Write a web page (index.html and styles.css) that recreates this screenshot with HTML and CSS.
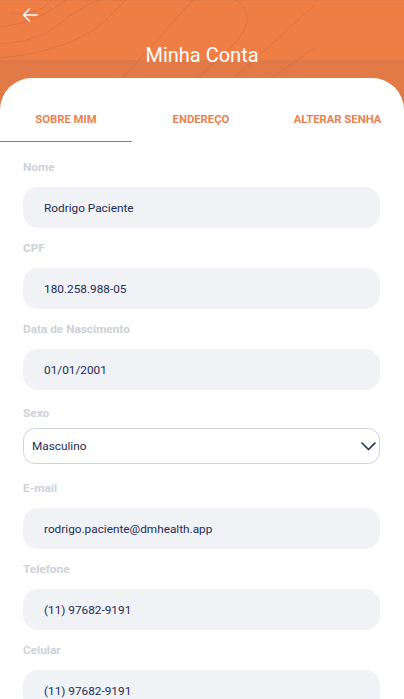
FILE: index.html
```html
<!DOCTYPE html>
<html lang="pt-BR">
<head>
<meta charset="utf-8">
<meta name="viewport" content="width=device-width, initial-scale=1">
<title>Minha Conta</title>
<link rel="stylesheet" href="styles.css">
</head>
<body>
<div class="screen">
  <header class="header">
    <svg class="topo" viewBox="0 0 404 80" preserveAspectRatio="none" aria-hidden="true">
      <path d="M10,13 C22,16 38,14 52,0"/>
      <path d="M0,27 C28,24 48,14 66,0"/>
      <path d="M0,44 C26,42 46,36 62,22 C74,12 86,4 100,0"/>
      <path d="M0,58 C40,54 80,44 108,18 L126,0"/>
      <path d="M120,80 C140,60 170,25 193,0"/>
      <path d="M236,0 C252,10 250,26 236,42 L196,80"/>
      <path d="M315,5 L232,80"/>
      <path d="M315,48 L268,80"/>
    </svg>
    <div class="header-bar">
      <button class="back" aria-label="Voltar">
        <svg width="18" height="18" viewBox="0 0 18 18"><path d="M16 9H2.5M8.5 3L2.5 9l6 6" fill="none" stroke="#fff" stroke-width="1.5" stroke-linecap="round" stroke-linejoin="round"/></svg>
      </button>
    </div>
    <h1 class="title">Minha Conta</h1>
  </header>

  <main class="card">
    <nav class="tabs">
      <a class="tab active">SOBRE MIM</a>
      <a class="tab">ENDEREÇO</a>
      <a class="tab">ALTERAR SENHA</a>
    </nav>

    <form class="form">
      <div class="field">
        <label class="label">Nome</label>
        <div class="input">Rodrigo Paciente</div>
      </div>
      <div class="field">
        <label class="label">CPF</label>
        <div class="input">180.258.988-05</div>
      </div>
      <div class="field">
        <label class="label">Data de Nascimento</label>
        <div class="input">01/01/2001</div>
      </div>
      <div class="field field-select">
        <label class="label">Sexo</label>
        <div class="select">
          <span>Masculino</span>
          <svg width="15" height="9" viewBox="0 0 15 9"><path d="M1 1l6.5 6.5L14 1" fill="none" stroke="#1c2d55" stroke-width="1.6" stroke-linecap="round" stroke-linejoin="round"/></svg>
        </div>
      </div>
      <div class="field">
        <label class="label">E-mail</label>
        <div class="input">rodrigo.paciente@dmhealth.app</div>
      </div>
      <div class="field">
        <label class="label">Telefone</label>
        <div class="input">(11) 97682-9191</div>
      </div>
      <div class="field">
        <label class="label">Celular</label>
        <div class="input">(11) 97682-9191</div>
      </div>
    </form>
  </main>
</div>
</body>
</html>
```

FILE: styles.css
```css
* { box-sizing: border-box; }

html, body {
  margin: 0;
  padding: 0;
  background: #ffffff;
}

body {
  font-family: Roboto, "Noto Sans", "Liberation Sans", sans-serif;
  -webkit-font-smoothing: antialiased;
}

.screen {
  width: 404px;
  height: 699px;
  overflow: hidden;
  background: linear-gradient(to bottom, #e47a46 0, #e47a46 1px, #ef7e44 1px, #ef7e44 60px, #e27a48 60px, #e27a48 100%);
}

.header {
  position: relative;
  padding-top: 6px;
  padding-bottom: 11px;
}

.topo {
  position: absolute;
  left: 0;
  top: 0;
  width: 404px;
  height: 80px;
  fill: none;
  stroke: rgba(150, 95, 80, 0.28);
  stroke-width: 1;
}

.header-bar {
  position: relative;
  height: 18px;
  padding-left: 21px;
  display: flex;
  align-items: center;
}

.back {
  display: flex;
  padding: 0;
  margin: 0;
  border: 0;
  background: none;
}

.title {
  position: relative;
  margin: 19px 0 0;
  height: 24px;
  line-height: 24px;
  font-size: 20px;
  font-weight: 400;
  color: #ffffff;
  text-align: center;
}

.card {
  position: relative;
  background: #ffffff;
  border-radius: 32px 32px 0 0;
  min-height: 640px;
}

.tabs {
  display: grid;
  grid-template-columns: 132px 1fr 1fr;
}

.tab {
  display: block;
  padding: 35px 0 14px;
  line-height: 14px;
  font-size: 11.3px;
  font-weight: 700;
  color: #e98250;
  text-align: center;
  border-bottom: 1px solid transparent;
}

.tab:nth-child(2) { padding-left: 2px; }
.tab:nth-child(3) { padding-left: 3px; }

.tab.active {
  border-bottom: 1.5px solid #4a8fd6;
}

.form {
  padding: 17px 24px 0 23px;
}

.field {
  margin-bottom: 12px;
}

.label {
  display: block;
  height: 16px;
  line-height: 16px;
  font-size: 11.8px;
  font-weight: 700;
  color: #cdd1da;
  margin-bottom: 12px;
}

.input {
  height: 41px;
  border-radius: 15px;
  background: #f1f2f6;
  padding-left: 21px;
  display: flex;
  align-items: center;
  font-size: 11.8px;
  color: #1c2d55;
}

.field-select {
  padding-top: 3px;
  margin-bottom: 16px;
}

.field-select .label {
  margin-bottom: 7px;
}

.select {
  height: 36px;
  border: 1px solid #cfd3dc;
  border-radius: 12px;
  background: #ffffff;
  padding: 0 3px 0 8px;
  display: flex;
  align-items: center;
  justify-content: space-between;
  font-size: 11.8px;
  color: #1c2d55;
}
```
